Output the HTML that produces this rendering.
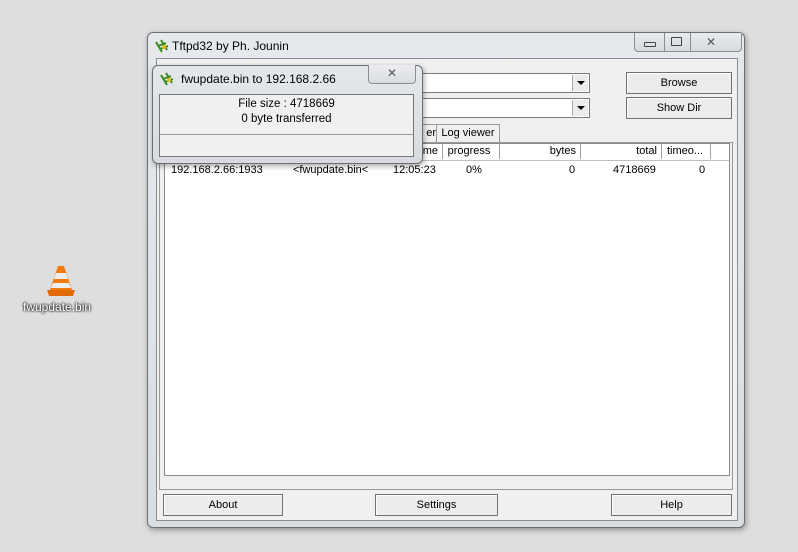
<!DOCTYPE html><html><head><style>
body{margin:0;width:798px;height:552px;background:#dedede;position:relative;overflow:hidden;font-family:"Liberation Sans",sans-serif;font-size:11px;color:#000}
.a{position:absolute}
.btn{position:absolute;background:#ececec;border:1px solid #707070;box-shadow:inset 1px 1px #fff;text-align:center;box-sizing:border-box;line-height:21px}
.frame{background:linear-gradient(#e6e9ec,#d8dde2);border:1px solid #6b6f74;border-radius:6px;box-shadow:1px 2px 6px rgba(0,0,0,.35)}
.combo{position:absolute;background:#fff;border:1px solid #7a7a7a;box-sizing:border-box}
.combo i{position:absolute;right:1px;top:1px;width:15px;height:16px;background:#ececec;border-left:1px solid #aaa}
.combo i:after{content:"";position:absolute;left:4px;top:6px;border:4px solid transparent;border-top:4px solid #000;border-bottom:0}
.h{position:absolute;top:0;height:15px;border-right:1px solid #a0a0a0;text-align:right;padding-right:4px;box-sizing:border-box;line-height:15px}
</style></head><body>
<svg class="a" style="left:46px;top:264px" width="30" height="34" viewBox="0 0 30 34"><path d="M12 2h6l8 24H4z" fill="#f07a10"/><path d="M10 9h10l2 6H8z" fill="#eee"/><path d="M7 19h16l2 5H5z" fill="#eee"/><path d="M1 26h28l-2 6H3z" fill="#e06a08"/></svg>
<div class="a" style="left:23px;top:300px;color:#fff;font-size:12px;text-shadow:0 0 2px #000,0 0 2px #000">fwupdate.bin</div>
<div class="a frame" style="left:147px;top:32px;width:596px;height:494px"></div>
<div class="a" style="left:172px;top:39px;font-size:12px">Tftpd32 by Ph. Jounin</div>
<svg class="a" style="left:155px;top:39px" width="16" height="14"><path d="M1 3l6 10M6 1l6 10M3 7l8-3M5 10l8-3" stroke="#3a8a20" stroke-width="2"/><circle cx="9" cy="8" r="2" fill="#e0c020"/></svg>
<div class="a" style="left:634px;top:33px;width:106px;height:18px;border:1px solid #8a8e93;border-top:0;border-radius:0 0 4px 4px;background:linear-gradient(#e8ebee,#d6dbe0)"></div>
<div class="a" style="left:664px;top:33px;width:1px;height:18px;background:#8a8e93"></div>
<div class="a" style="left:690px;top:33px;width:1px;height:18px;background:#8a8e93"></div>
<div class="a" style="left:644px;top:42px;width:10px;height:3px;border:1px solid #444;border-radius:1px"></div>
<div class="a" style="left:671px;top:37px;width:9px;height:7px;border:1px solid #444;border-radius:1px"></div>
<div class="a" style="left:706px;top:35px;font-size:12px;color:#555">✕</div>
<div class="a" style="left:156px;top:58px;width:580px;height:461px;background:#f0f0f0;border:1px solid #8a8e93"></div>
<div class="combo" style="left:400px;top:73px;width:190px;height:20px"><i></i></div>
<div class="combo" style="left:400px;top:98px;width:190px;height:20px"><i></i></div>
<div class="btn" style="left:626px;top:72px;width:106px;height:22px">Browse</div>
<div class="btn" style="left:626px;top:97px;width:106px;height:22px">Show Dir</div>
<div class="a" style="left:405px;top:124px;width:30px;height:18px;border:1px solid #999;border-bottom:0;background:#f0f0f0;line-height:17px;text-align:right">er</div>
<div class="a" style="left:436px;top:124px;width:62px;height:18px;border:1px solid #999;border-bottom:0;background:#f0f0f0;line-height:17px;text-align:center">Log viewer</div>
<div class="a" style="left:159px;top:142px;width:574px;height:348px;border:1px solid #999;box-sizing:border-box"></div>
<div class="a" style="left:164px;top:143px;width:566px;height:333px;background:#fff;border:1px solid #8a8a8a;box-sizing:border-box;overflow:hidden">
 <div class="a" style="left:0;top:0;width:566px;height:16px;border-bottom:1px solid #c0c0c0"></div>
 <div class="h" style="left:220px;width:58px">me</div>
 <div class="h" style="left:278px;width:57px;text-align:center">progress</div>
 <div class="h" style="left:335px;width:81px">bytes</div>
 <div class="h" style="left:416px;width:81px">total</div>
 <div class="h" style="left:497px;width:49px;text-align:left;padding-left:5px">timeo...</div>
 <div class="a" style="left:6px;top:20px">192.168.2.66:1933</div>
 <div class="a" style="left:128px;top:20px">&lt;fwupdate.bin&lt;</div>
 <div class="a" style="left:228px;top:20px">12:05:23</div>
 <div class="a" style="left:301px;top:20px">0%</div>
 <div class="a" style="left:404px;top:20px">0</div>
 <div class="a" style="left:448px;top:20px">4718669</div>
 <div class="a" style="left:534px;top:20px">0</div>
</div>
<div class="btn" style="left:163px;top:494px;width:120px;height:22px">About</div>
<div class="btn" style="left:375px;top:494px;width:123px;height:22px">Settings</div>
<div class="btn" style="left:611px;top:494px;width:121px;height:22px">Help</div>
<div class="a frame" style="left:152px;top:65px;width:269px;height:97px;background:linear-gradient(#e4e7eb,#d8dce1)"></div>
<svg class="a" style="left:160px;top:72px" width="16" height="14"><path d="M1 3l6 10M6 1l6 10M3 7l8-3M5 10l8-3" stroke="#3a8a20" stroke-width="2"/><circle cx="9" cy="8" r="2" fill="#e0c020"/></svg>
<div class="a" style="left:181px;top:72px;font-size:12px">fwupdate.bin to 192.168.2.66</div>
<div class="a" style="left:368px;top:65px;width:46px;height:18px;border:1px solid #8a8e93;border-top:0;border-radius:0 0 4px 4px;background:linear-gradient(#eceef0,#d8dce0);text-align:center;color:#555;font-size:12px;line-height:17px">✕</div>
<div class="a" style="left:159px;top:94px;width:255px;height:63px;background:#f0f0f0;border:1px solid #777;box-sizing:border-box"></div>
<div class="a" style="left:159px;top:97px;width:255px;text-align:center;line-height:15px;font-size:11.5px">File size : 4718669<br>0 byte transferred</div>
<div class="a" style="left:160px;top:134px;width:253px;height:1px;background:#999"></div>
</body></html>
